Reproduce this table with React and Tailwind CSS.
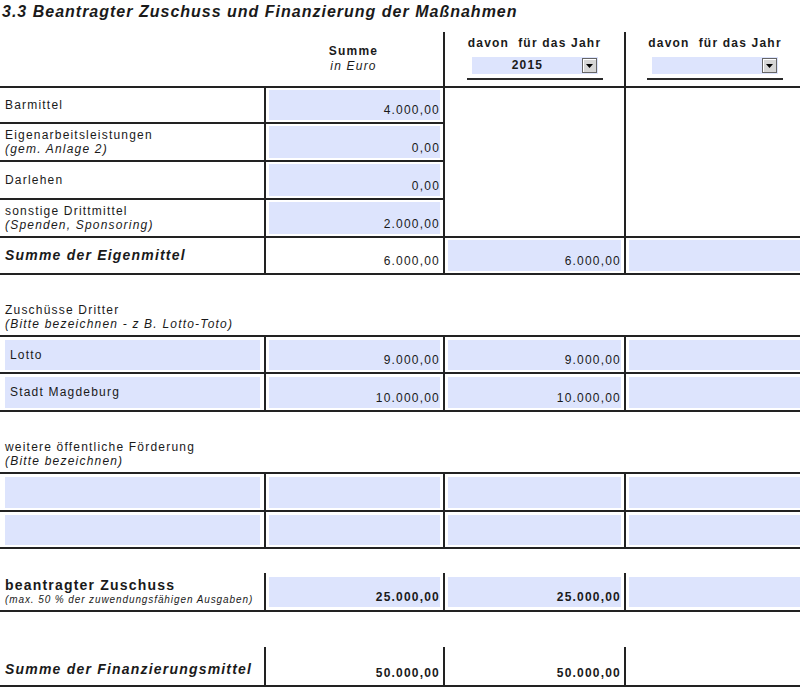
import React from 'react';

const COLS = 'grid grid-cols-[264px_179px_181px_176px]';

const OWN_FUNDS = [
  { label: 'Barmittel', value: '4.000,00', h: 'h-[36px]' },
  { label: 'Eigenarbeitsleistungen', note: '(gem. Anlage 2)', value: '0,00', h: 'h-[38px]' },
  { label: 'Darlehen', value: '0,00', h: 'h-[38px]' },
  { label: 'sonstige Drittmittel', note: '(Spenden, Sponsoring)', value: '2.000,00', h: 'h-[36px]', last: true },
];

const THIRD_PARTY = [
  { label: 'Lotto', sum: '9.000,00', year1: '9.000,00', h: 'h-[37px]' },
  { label: 'Stadt Magdeburg', sum: '10.000,00', year1: '10.000,00', h: 'h-[38px]' },
];

// value cell with optional blue form field, number at bottom right
function ValueCell({ value, field = true, bold = false, edge = false, pad = 'py-[2px]' }) {
  return (
    <div className={`border-l-2 border-[#222] pl-[3px] ${edge ? 'pr-0' : 'pr-[3px]'} ${pad}`}>
      <div
        className={`flex h-full items-end justify-end pb-[2px] ${field ? 'bg-[#dde4fd]' : ''} ${bold ? 'font-bold' : ''}`}
      >
        <span className="leading-[15px]">{value}</span>
      </div>
    </div>
  );
}

function YearSelect({ value }) {
  return (
    <div className="flex flex-col items-center">
      <div className="mt-[6px] flex h-[17px] w-[126px] items-center bg-[#dde4fd]">
        <span className="flex-1 pl-[2px] text-center font-bold leading-[15px]">{value}</span>
        <span className="mr-[1px] flex h-[15px] w-[15px] items-center justify-center border border-[#666] bg-[#d6d6d6] shadow-[inset_1px_1px_0_#fff]">
          <svg width="7" height="4" viewBox="0 0 7 4">
            <path d="M0 0h7L3.5 4z" fill="#000" />
          </svg>
        </span>
      </div>
      <div className="mt-[4px] h-[2px] w-[136px] bg-[#2a2a2a]" />
    </div>
  );
}

function NamedRow({ label, sum, year1, h }) {
  return (
    <div className={`${COLS} ${h} border-b-2 border-[#222]`}>
      <div className="pt-[3px] pb-[2px] pl-[5px] pr-[4px]">
        <div className="flex h-full items-center bg-[#dde4fd] pl-[5px]">
          <span className="leading-[15px]">{label}</span>
        </div>
      </div>
      <ValueCell value={sum} pad="pt-[3px] pb-[2px]" />
      <ValueCell value={year1} pad="pt-[3px] pb-[2px]" />
      <ValueCell value="" edge pad="pt-[3px] pb-[2px]" />
    </div>
  );
}

function GroupHeading({ title, note }) {
  return (
    <div className="flex h-[60px] flex-col justify-end pb-[4px] pl-[5px] leading-[14px]">
      <span>{title}</span>
      <span className="italic">{note}</span>
    </div>
  );
}

export default function App() {
  return (
    <div className="h-[698px] w-[800px] overflow-hidden bg-white font-['Liberation_Sans',Arial,sans-serif] text-[12px] tracking-[1.2px] text-[#1a1a1a]">
      {/* Title */}
      <div className="h-[32px] pl-[2px] pt-[2px] text-[16px] font-bold italic leading-[20px] tracking-[1px]">
        3.3 Beantragter Zuschuss und Finanzierung der Maßnahmen
      </div>

      {/* Column header */}
      <div className={`${COLS} h-[56px] border-b-2 border-[#222]`}>
        <div />
        <div className="flex flex-col items-center pt-[12px] leading-[15px]">
          <span className="font-bold">Summe</span>
          <span className="italic">in Euro</span>
        </div>
        <div className="flex flex-col items-center border-l-2 border-[#222] pt-[4px]">
          <span className="whitespace-pre font-bold leading-[15px]">davon  für das Jahr</span>
          <YearSelect value="2015" />
        </div>
        <div className="flex flex-col items-center border-l-2 border-[#222] pl-[4px] pt-[4px]">
          <span className="whitespace-pre font-bold leading-[15px]">davon  für das Jahr</span>
          <YearSelect value="" />
        </div>
      </div>

      {/* Eigenmittel */}
      <div className="flex border-b-2 border-[#222]">
        <div className="flex w-[443px] flex-col">
          {OWN_FUNDS.map((row) => (
            <div
              key={row.label}
              className={`grid grid-cols-[264px_179px] ${row.h} ${row.last ? '' : 'border-b-2 border-[#222]'}`}
            >
              <div className="flex flex-col justify-center pl-[5px] leading-[14px]">
                <span>{row.label}</span>
                {row.note && <span className="italic">{row.note}</span>}
              </div>
              <ValueCell value={row.value} />
            </div>
          ))}
        </div>
        <div className="w-[181px] border-l-2 border-[#222]" />
        <div className="flex-1 border-l-2 border-[#222]" />
      </div>

      <div className={`${COLS} h-[37px] border-b-2 border-[#222]`}>
        <div className="flex items-center pl-[5px] text-[14px] font-bold italic">Summe der Eigenmittel</div>
        <ValueCell value="6.000,00" field={false} />
        <ValueCell value="6.000,00" />
        <ValueCell value="" edge />
      </div>

      {/* Zuschüsse Dritter */}
      <GroupHeading title="Zuschüsse Dritter" note="(Bitte bezeichnen - z B. Lotto-Toto)" />
      <div className="border-t-2 border-[#222]">
        {THIRD_PARTY.map((row) => (
          <NamedRow key={row.label} {...row} />
        ))}
      </div>

      {/* weitere öffentliche Förderung */}
      <GroupHeading title="weitere öffentliche Förderung" note="(Bitte bezeichnen)" />
      <div className="border-t-2 border-[#222]">
        <NamedRow label="" sum="" year1="" h="h-[38px]" />
        <NamedRow label="" sum="" year1="" h="h-[37px]" />
      </div>

      {/* beantragter Zuschuss */}
      <div className={`${COLS} mt-[24px] h-[39px] border-b-2 border-[#222]`}>
        <div className="flex flex-col justify-center pl-[5px]">
          <span className="text-[14px] font-bold leading-[16px]">beantragter Zuschuss</span>
          <span className="text-[10px] italic leading-[13px] tracking-[0.9px]">
            (max. 50 % der zuwendungsfähigen Ausgaben)
          </span>
        </div>
        <ValueCell value="25.000,00" bold pad="pt-[4px] pb-[3px]" />
        <ValueCell value="25.000,00" bold pad="pt-[4px] pb-[3px]" />
        <ValueCell value="" edge pad="pt-[4px] pb-[3px]" />
      </div>

      {/* Summe der Finanzierungsmittel */}
      <div className={`${COLS} mt-[35px] h-[40px] border-b-2 border-[#222]`}>
        <div className="flex items-center pl-[5px] pt-[6px] text-[14px] font-bold italic">
          Summe der Finanzierungsmittel
        </div>
        <ValueCell value="50.000,00" field={false} bold />
        <ValueCell value="50.000,00" field={false} bold />
        <ValueCell value="" field={false} edge />
      </div>
    </div>
  );
}
